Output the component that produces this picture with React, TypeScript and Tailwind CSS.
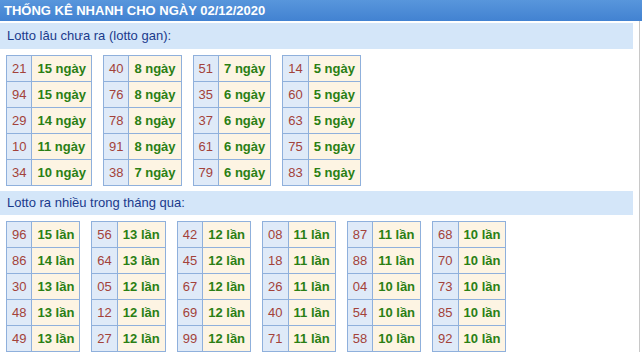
import React from 'react';

// Bảng thống kê nhanh lotto

type Row = [string, string];

const GAN: Row[][] = [
  [['21', '15'], ['94', '15'], ['29', '14'], ['10', '11'], ['34', '10']],
  [['40', '8'], ['76', '8'], ['78', '8'], ['91', '8'], ['38', '7']],
  [['51', '7'], ['35', '6'], ['37', '6'], ['61', '6'], ['79', '6']],
  [['14', '5'], ['60', '5'], ['63', '5'], ['75', '5'], ['83', '5']],
];

const NHIEU: Row[][] = [
  [['96', '15'], ['86', '14'], ['30', '13'], ['48', '13'], ['49', '13']],
  [['56', '13'], ['64', '13'], ['05', '12'], ['12', '12'], ['27', '12']],
  [['42', '12'], ['45', '12'], ['67', '12'], ['69', '12'], ['99', '12']],
  [['08', '11'], ['18', '11'], ['26', '11'], ['40', '11'], ['71', '11']],
  [['87', '11'], ['88', '11'], ['04', '10'], ['54', '10'], ['58', '10']],
  [['68', '10'], ['70', '10'], ['73', '10'], ['85', '10'], ['92', '10']],
];

const StatTable: React.FC<{ rows: Row[]; unit: string }> = ({ rows, unit }) => (
  <table className="border-collapse text-[13px] leading-[15px]">
    <tbody>
      {rows.map(([so, dem]) => (
        <tr key={so} className="h-[26px]">
          <td className="border border-[#8fb0dc] bg-[#dfeaf8] px-[5px] text-center text-[#a3423a]">{so}</td>
          <td className="border border-[#8fb0dc] bg-[#fdf4e3] px-[5px] font-bold text-[#2a7f14] whitespace-nowrap">
            {dem} {unit}
          </td>
        </tr>
      ))}
    </tbody>
  </table>
);

const SectionTitle: React.FC<{ children: React.ReactNode; h: string }> = ({ children, h }) => (
  <div className={`bg-[#d4e6f9] text-[13px] text-[#1a3a8c] pl-[7px] flex items-center ${h}`}>{children}</div>
);

export default function App() {
  return (
    <div className="w-[642px] h-[354px] bg-white overflow-hidden" style={{ fontFamily: '"Liberation Sans", Arial, sans-serif' }}>
      <div className="h-[21px] bg-gradient-to-b from-[#5896dc] to-[#4282d1] text-white font-bold text-[13px] pl-[4px] flex items-center">
        THỐNG KÊ NHANH CHO NGÀY 02/12/2020
      </div>
      <div className="w-[640px] border-r border-[#c8c8c8] pr-[6px] pt-[2px]">
        <SectionTitle h="h-[26px]">Lotto lâu chưa ra (lotto gan):</SectionTitle>
        <div className="flex gap-[11px] pl-[6px] pt-[6px] pb-[5px]">
          {GAN.map((rows, i) => (
            <StatTable key={i} rows={rows} unit="ngày" />
          ))}
        </div>
        <SectionTitle h="h-[24px]">Lotto ra nhiều trong tháng qua:</SectionTitle>
        <div className="flex gap-[11px] pl-[6px] pt-[6px]">
          {NHIEU.map((rows, i) => (
            <StatTable key={i} rows={rows} unit="lần" />
          ))}
        </div>
      </div>
    </div>
  );
}
